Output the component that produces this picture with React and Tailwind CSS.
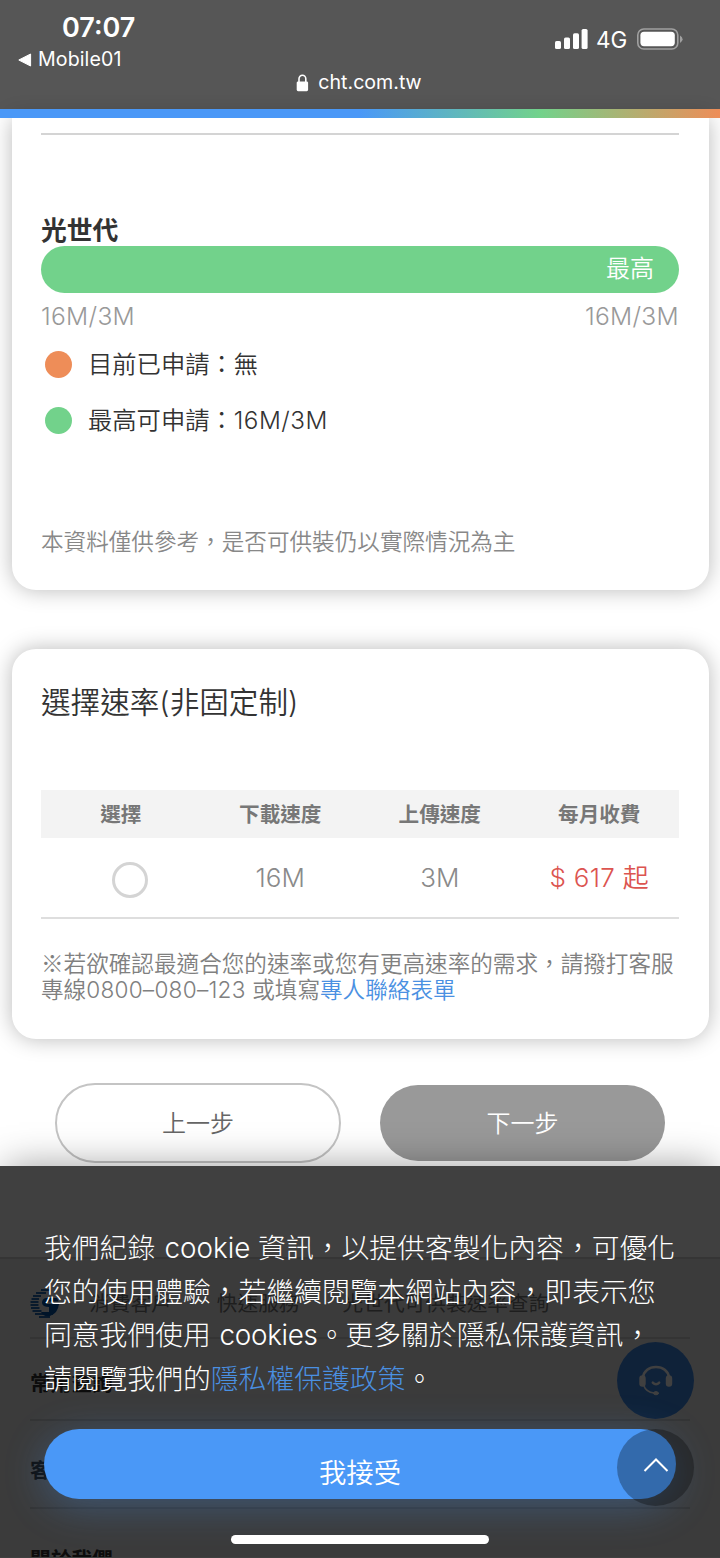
import React from "react";

const COLUMNS = ["選擇", "下載速度", "上傳速度", "每月收費"];

const StatusBar = () => (
  <header className="h-[109px] bg-[#565656] text-white flex flex-col">
    <div className="flex justify-between h-[72px]">
      <div className="pl-[18px] pt-[11px]">
        <div className="pl-[44px] h-[34px] leading-[34px] text-[27px] font-semibold">
          07:07
        </div>
        <div className="flex items-center h-[30px] text-[19.6px] tracking-[0.1px]">
          <svg width="14" height="14" viewBox="0 0 14 14" className="mr-[6px]">
            <path d="M0.8 7 L12.6 1 V13 Z" fill="#fff" stroke="#fff" strokeLinejoin="round" />
          </svg>
          Mobile01
        </div>
      </div>
      <div className="flex items-start pr-[37px] pt-[28px]">
        <svg width="33" height="22" viewBox="0 0 33 22" fill="#fff">
          <rect x="0" y="13" width="6" height="8" rx="1.6" />
          <rect x="9" y="9.6" width="6" height="11.4" rx="1.6" />
          <rect x="18" y="5.2" width="6" height="15.8" rx="1.6" />
          <rect x="26.6" y="1" width="6" height="20" rx="1.6" />
        </svg>
        <span className="ml-[8px] w-[41px] text-[22.5px] leading-[24px]">4G</span>
        <svg width="46" height="22" viewBox="0 0 46 22">
          <rect x="0.8" y="1" width="40" height="20" rx="6" fill="none" stroke="#a0a0a0" strokeWidth="1.6" />
          <rect x="3.4" y="3.8" width="34.4" height="14.4" rx="3.6" fill="#fff" />
          <path d="M43 7.6 Q45.6 9.2 45.6 11.2 Q45.6 13.4 43 15 Z" fill="#a0a0a0" />
        </svg>
      </div>
    </div>
    <div className="flex items-center justify-center h-[22px] pr-[2px] text-[19.6px]">
      <svg width="13" height="18" viewBox="0 0 13 18" className="mr-[9px]">
        <path d="M3 8 V4.8 a3.4 3.6 0 0 1 6.8 0 V8" fill="none" stroke="#fff" strokeWidth="1.6" />
        <rect x="0.7" y="7.4" width="11.4" height="9.8" rx="1.4" fill="#fff" />
      </svg>
      cht.com.tw
    </div>
  </header>
);

const Legend = ({ color, children }) => (
  <div className="flex items-center h-[56px] pl-[4px]">
    <span className={`w-[27px] h-[27px] rounded-full ${color}`} />
    <span className="ml-[16px] text-[24.3px] font-[350] text-[#333]">{children}</span>
  </div>
);

const CoverageCard = () => (
  <section className="mx-[11.5px] h-[472px] px-[29.5px] bg-white rounded-b-[24px] shadow-[0_0_22px_rgba(0,0,0,0.28)]">
    <div className="h-[16.5px] border-b-2 border-[#d4d4d4]" />
    <h2 className="mt-[76px] h-[35px] leading-[39px] text-[25.8px] font-bold text-[#333]">
      光世代
    </h2>
    <div className="h-[47px] rounded-full bg-[#72d28b] flex items-center justify-end pr-[25px] text-white text-[24px] font-[350]">
      最高
    </div>
    <div className="flex justify-between h-[44px] leading-[47px] text-[24.6px] font-light text-[#999] tracking-[0.3px]">
      <span>16M/3M</span>
      <span>16M/3M</span>
    </div>
    <Legend color="bg-[#ee8d58]">目前已申請：無</Legend>
    <Legend color="bg-[#72d28b]">
      最高可申請：<span className="tracking-[0.5px]">16M/3M</span>
    </Legend>
    <p className="mt-[75px] h-[36px] leading-[36px] text-[22.6px] font-[350] text-[#888] whitespace-nowrap">
      本資料僅供參考，是否可供裝仍以實際情況為主
    </p>
  </section>
);

const SpeedCard = () => (
  <section className="mt-[59px] mx-[11.5px] h-[390px] px-[29.5px] pt-[33px] bg-white rounded-[24px] shadow-[0_0_22px_rgba(0,0,0,0.28)]">
    <h2 className="h-[40px] leading-[40px] text-[29.6px] font-[350] text-[#333]">
      選擇速率(非固定制)
    </h2>
    <div className="mt-[68px] h-[48px] pt-[2px] grid grid-cols-4 items-center text-center bg-[#f3f3f3] text-[20.6px] font-semibold text-[#777]">
      {COLUMNS.map((name) => (
        <span key={name}>{name}</span>
      ))}
    </div>
    <div className="h-[81px] grid grid-cols-4 items-center text-center text-[26px] font-light text-[#8a8a8a] border-b-2 border-[#dedede]">
      <span className="flex justify-center pl-[18px] pt-[4px]">
        <span className="w-[36px] h-[36px] rounded-full border-3 border-[#d4d4d4]" />
      </span>
      <span>16M</span>
      <span>3M</span>
      <span className="text-[#dc5450] font-[350] tracking-[0.3px]">$ 617 起</span>
    </div>
    <p className="mt-[31px] leading-[26px] text-[22.6px] font-[350] text-[#808080] whitespace-nowrap">
      <span className="font-['Noto_Sans_CJK_TC']">※</span>
      若欲確認最適合您的速率或您有更高速率的需求，請撥打客服
      <br />
      專線<span className="tracking-[0.25px]">0800–080–123 </span>或填寫
      <span className="text-[#4a90e2]">專人聯絡表單</span>
    </p>
  </section>
);

const Logo = () => (
  <svg width="30" height="32" viewBox="0 0 30 32">
    <g stroke="#0050a5" strokeWidth="1.7">
      <path d="M11 2 H20" />
      <path d="M6 5 H16" />
      <path d="M3 8 H11" />
      <path d="M1.5 11 H9" />
      <path d="M0.5 14 H8.5" />
      <path d="M0.5 17 H8.5" />
      <path d="M1 20 H9.5" />
      <path d="M2.5 23 H11.5" />
      <path d="M5 26 H23" />
      <path d="M9 29 H20" />
    </g>
    <path
      d="M27 10 H16 Q12 10.5 12 15 Q12.5 19 19 19 V24 H11 Q14 29.5 20 28 Q28 25 29 16 H17 V13.5 H28.5 Z"
      fill="#0050a5"
    />
  </svg>
);

const SiteFooter = () => (
  <footer className="h-[300px] px-[30px] bg-[#ececec] border-t-2 border-[#d4d4d4] text-[20.7px] overflow-hidden">
    <div className="h-[80px] pt-[11px] flex items-center text-[#777] border-b-2 border-[#d0d0d0]">
      <Logo />
      <span className="ml-[29px]">消費客戶</span>
      <span className="ml-[45px]">快速服務</span>
      <span className="ml-[43px]">光世代可供裝速率查詢</span>
    </div>
    <div className="font-bold text-[#333]">
      <div className="h-[82px] pt-[10px] flex items-center border-b-2 border-[#d0d0d0]">
        常用查詢
      </div>
      <div className="h-[88px] pt-[14px] flex items-center border-b-2 border-[#d0d0d0]">
        客戶服務
      </div>
      <div className="h-[88px] pt-[14px] flex items-center">關於我們</div>
    </div>
  </footer>
);

const SupportBubble = () => (
  <div className="absolute top-[1342px] left-[617px] w-[77px] h-[77px] rounded-full bg-[#3f88e4] flex items-center justify-center">
    <svg width="36" height="32" viewBox="0 0 36 32" fill="none" stroke="#fff" strokeLinecap="round">
      <path d="M5 12 C6 6 11 2 18 2 C25 2 30 6 31 12" strokeWidth="2.6" />
      <rect x="2" y="11" width="5" height="10" rx="2.5" fill="#fff" strokeWidth="1.4" />
      <rect x="28.5" y="11" width="5" height="10" rx="2.5" fill="#fff" strokeWidth="1.4" />
      <path d="M6 21 Q8 27 16 28" strokeWidth="1.6" />
      <ellipse cx="18" cy="28.2" rx="2.4" ry="1.6" fill="#fff" />
      <path d="M14.8 17.6 Q18 21 21.2 17.6" strokeWidth="2.4" />
    </svg>
  </div>
);

const CookieNotice = () => (
  <div className="absolute top-[1166px] left-0 w-[720px] h-[392px] bg-black/75 shadow-[0_-6px_36px_-6px_rgba(0,0,0,0.38)] px-[44px] pt-[61px]">
    <p className="text-[27.8px] leading-[43.6px] font-light text-white whitespace-nowrap">
      我們紀錄 <span className="ml-[1.5px]">cookie</span> 資訊，以提供客製化內容，可優化
      <br />
      您的使用體驗，若繼續閱覽本網站內容，即表示您
      <br />
      同意我們使用 <span className="ml-[1px] tracking-[-0.3px]">cookies</span>。更多關於隱私保護資訊，
      <br />
      請閱覽我們的<span className="text-[#4a90e2]">隱私權保護政策</span>。
    </p>
    <button className="mt-[28px] w-[632px] h-[70px] pt-[17px] leading-[54px] rounded-full bg-[#4a98f7] text-white text-[27.4px] font-[350] shadow-[0_8px_40px_rgba(74,152,247,0.3)]">
      我接受
    </button>
  </div>
);

const App = () => (
  <div
    className="relative w-[720px] h-[1558px] overflow-hidden bg-white"
    style={{ fontFamily: 'Inter, "Noto Sans CJK TC", sans-serif' }}
  >
    <StatusBar />
    <div className="relative z-10 h-[9px] bg-[linear-gradient(to_right,#4a98f7_50%,#72d28b_75%,#ee8d58_100%)]" />
    <main className="h-[1139px]">
      <CoverageCard />
      <SpeedCard />
      <div className="mt-[44px] flex items-center gap-[39px] pl-[55px] text-[24px] font-[350]">
        <button className="w-[286px] h-[80px] pt-[1px] rounded-full border-2 border-[#c4c4c4] text-[#666]">
          上一步
        </button>
        <button className="w-[285px] h-[76px] pt-[1px] rounded-full bg-[#999] text-white">
          下一步
        </button>
      </div>
    </main>
    <SiteFooter />
    <SupportBubble />
    <CookieNotice />

    {/* Back to top */}
    <div className="absolute top-[1429px] left-[617px] w-[77px] h-[77px] rounded-full bg-black/30 flex items-center justify-center">
      <svg width="26" height="16" viewBox="0 0 26 16" className="-mt-[5px]">
        <path d="M1.5 14 L13 2.5 L24.5 14" fill="none" stroke="#fff" strokeWidth="2" />
      </svg>
    </div>

    {/* Home indicator */}
    <div className="absolute top-[1535px] left-[231px] w-[258px] h-[9px] rounded-full bg-white" />
  </div>
);

export default App;
